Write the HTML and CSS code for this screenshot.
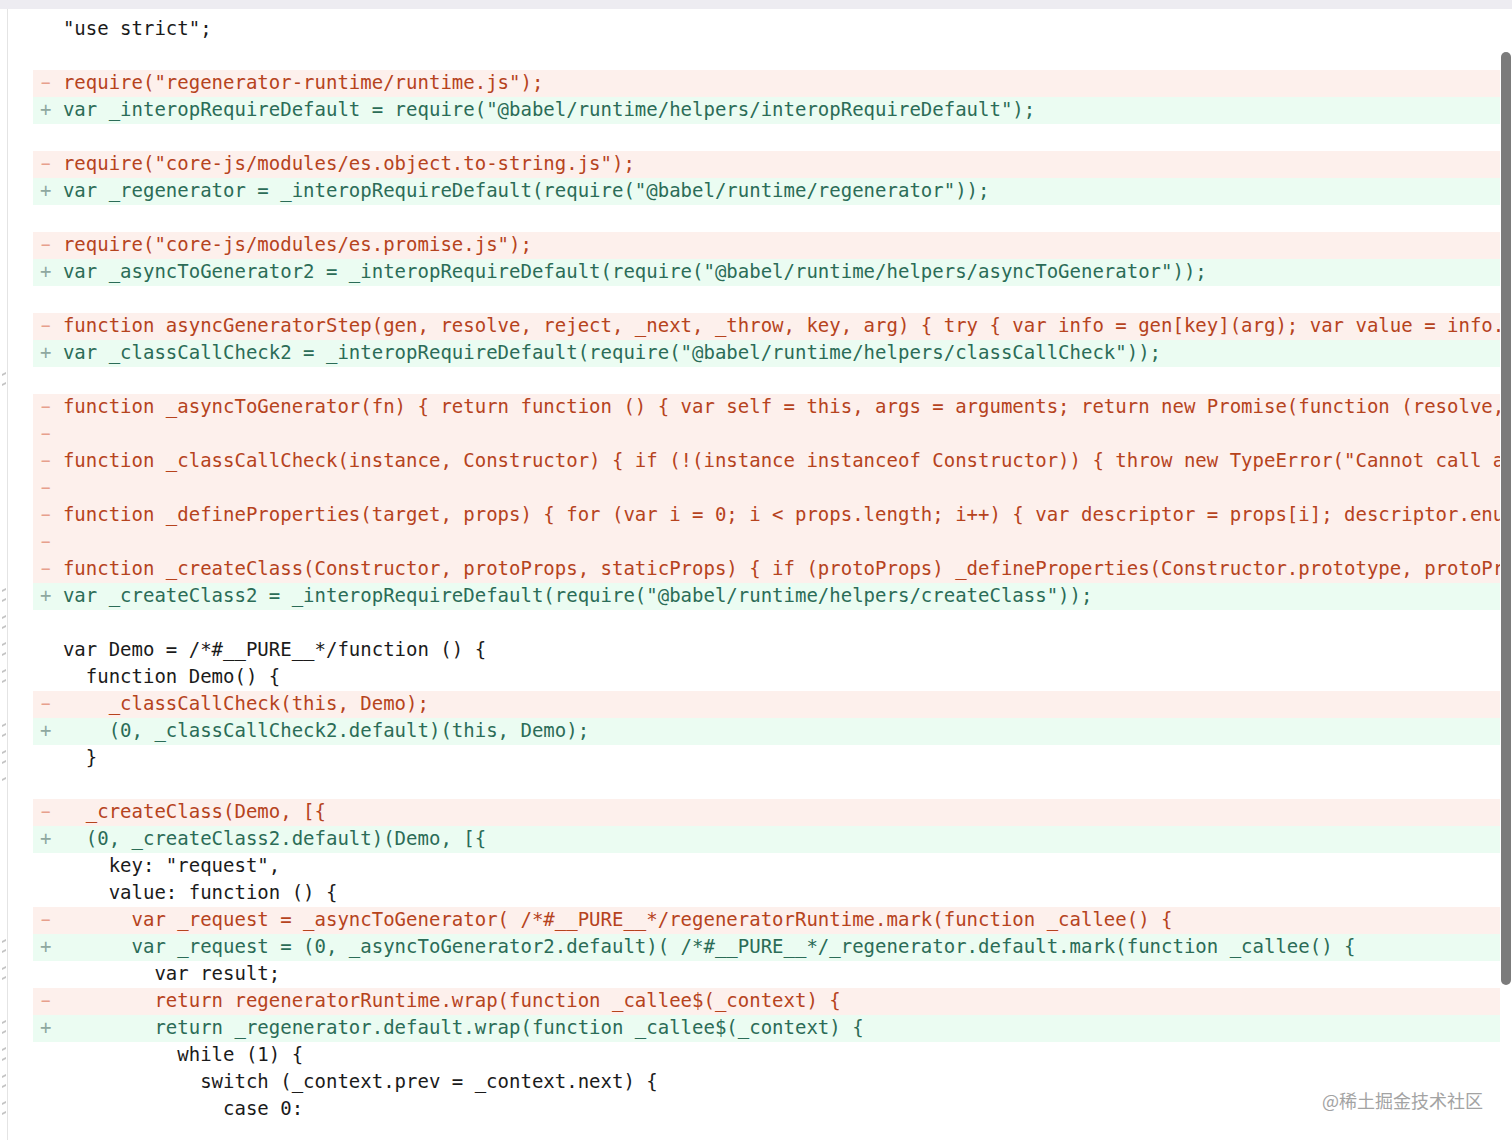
FILE: index.html
```html
<!DOCTYPE html>
<html lang="en">
<head>
<meta charset="utf-8">
<title>diff</title>
<link rel="stylesheet" href="styles.css">
</head>
<body>
<div class="topbar"></div>
<div class="editor">
  <div class="lines">
    <div class="line"><i class="gut"></i><span class="code">  "use strict";</span></div>
    <div class="line empty"><i class="gut"></i><span class="code"></span></div>
    <div class="line del"><i class="gut"></i><span class="code"><b class="sg">-</b> require("regenerator-runtime/runtime.js");</span></div>
    <div class="line add"><i class="gut"></i><span class="code"><b class="sg">+</b> var _interopRequireDefault = require("@babel/runtime/helpers/interopRequireDefault");</span></div>
    <div class="line empty"><i class="gut"></i><span class="code"></span></div>
    <div class="line del"><i class="gut"></i><span class="code"><b class="sg">-</b> require("core-js/modules/es.object.to-string.js");</span></div>
    <div class="line add"><i class="gut"></i><span class="code"><b class="sg">+</b> var _regenerator = _interopRequireDefault(require("@babel/runtime/regenerator"));</span></div>
    <div class="line empty"><i class="gut"></i><span class="code"></span></div>
    <div class="line del"><i class="gut"></i><span class="code"><b class="sg">-</b> require("core-js/modules/es.promise.js");</span></div>
    <div class="line add"><i class="gut"></i><span class="code"><b class="sg">+</b> var _asyncToGenerator2 = _interopRequireDefault(require("@babel/runtime/helpers/asyncToGenerator"));</span></div>
    <div class="line empty"><i class="gut"></i><span class="code"></span></div>
    <div class="line del"><i class="gut"></i><span class="code"><b class="sg">-</b> function asyncGeneratorStep(gen, resolve, reject, _next, _throw, key, arg) { try { var info = gen[key](arg); var value = info.value; } catch (error) { reject(error); return; } if (info.done) { resolve(value); } else { Promise.resolve(value).then(_next, _throw); } }</span></div>
    <div class="line add"><i class="gut"></i><span class="code"><b class="sg">+</b> var _classCallCheck2 = _interopRequireDefault(require("@babel/runtime/helpers/classCallCheck"));</span></div>
    <div class="line empty"><i class="gut mk"></i><span class="code"></span></div>
    <div class="line del"><i class="gut"></i><span class="code"><b class="sg">-</b> function _asyncToGenerator(fn) { return function () { var self = this, args = arguments; return new Promise(function (resolve, reject) { var gen = fn.apply(self, args); }); }; }</span></div>
    <div class="line del"><i class="gut"></i><span class="code"><b class="sg">-</b></span></div>
    <div class="line del"><i class="gut"></i><span class="code"><b class="sg">-</b> function _classCallCheck(instance, Constructor) { if (!(instance instanceof Constructor)) { throw new TypeError("Cannot call a class as a function"); } }</span></div>
    <div class="line del"><i class="gut"></i><span class="code"><b class="sg">-</b></span></div>
    <div class="line del"><i class="gut"></i><span class="code"><b class="sg">-</b> function _defineProperties(target, props) { for (var i = 0; i &lt; props.length; i++) { var descriptor = props[i]; descriptor.enumerable = descriptor.enumerable || false; } }</span></div>
    <div class="line del"><i class="gut"></i><span class="code"><b class="sg">-</b></span></div>
    <div class="line del"><i class="gut"></i><span class="code"><b class="sg">-</b> function _createClass(Constructor, protoProps, staticProps) { if (protoProps) _defineProperties(Constructor.prototype, protoProps); if (staticProps) _defineProperties(Constructor, staticProps); return Constructor; }</span></div>
    <div class="line add"><i class="gut mk"></i><span class="code"><b class="sg">+</b> var _createClass2 = _interopRequireDefault(require("@babel/runtime/helpers/createClass"));</span></div>
    <div class="line empty"><i class="gut mk"></i><span class="code"></span></div>
    <div class="line"><i class="gut mk"></i><span class="code">  var Demo = /*#__PURE__*/function () {</span></div>
    <div class="line"><i class="gut mk"></i><span class="code">    function Demo() {</span></div>
    <div class="line del"><i class="gut"></i><span class="code"><b class="sg">-</b>     _classCallCheck(this, Demo);</span></div>
    <div class="line add"><i class="gut mk"></i><span class="code"><b class="sg">+</b>     (0, _classCallCheck2.default)(this, Demo);</span></div>
    <div class="line"><i class="gut mk"></i><span class="code">    }</span></div>
    <div class="line empty"><i class="gut mk1"></i><span class="code"></span></div>
    <div class="line del"><i class="gut"></i><span class="code"><b class="sg">-</b>   _createClass(Demo, [{</span></div>
    <div class="line add"><i class="gut"></i><span class="code"><b class="sg">+</b>   (0, _createClass2.default)(Demo, [{</span></div>
    <div class="line"><i class="gut"></i><span class="code">      key: "request",</span></div>
    <div class="line"><i class="gut"></i><span class="code">      value: function () {</span></div>
    <div class="line del"><i class="gut"></i><span class="code"><b class="sg">-</b>       var _request = _asyncToGenerator( /*#__PURE__*/regeneratorRuntime.mark(function _callee() {</span></div>
    <div class="line add"><i class="gut mk"></i><span class="code"><b class="sg">+</b>       var _request = (0, _asyncToGenerator2.default)( /*#__PURE__*/_regenerator.default.mark(function _callee() {</span></div>
    <div class="line"><i class="gut mk"></i><span class="code">          var result;</span></div>
    <div class="line del"><i class="gut"></i><span class="code"><b class="sg">-</b>         return regeneratorRuntime.wrap(function _callee$(_context) {</span></div>
    <div class="line add"><i class="gut mk"></i><span class="code"><b class="sg">+</b>         return _regenerator.default.wrap(function _callee$(_context) {</span></div>
    <div class="line"><i class="gut mk"></i><span class="code">            while (1) {</span></div>
    <div class="line"><i class="gut mk"></i><span class="code">              switch (_context.prev = _context.next) {</span></div>
    <div class="line"><i class="gut mk"></i><span class="code">                case 0:</span></div>
    <div class="line empty"><i class="gut"></i><span class="code"></span></div>
  </div>
  <div class="scroll"><div class="thumb"></div></div>
</div>
<div class="watermark">@稀土掘金技术社区</div>
</body>
</html>
```

FILE: styles.css
```css
html, body {
  margin: 0;
  padding: 0;
  background: #ffffff;
  overflow: hidden;
  width: 1512px;
  height: 1140px;
}

.topbar {
  height: 9px;
  background: #edecf1;
}

.editor {
  display: flex;
  height: 1131px;
  overflow: hidden;
}

.lines {
  flex: 1;
  min-width: 0;
  padding-top: 7px;
  background: linear-gradient(#e4e4e4, #e4e4e4) 7px 0 / 1px 100% no-repeat;
}

.line {
  display: flex;
  height: 27px;
}

.gut {
  position: relative;
  flex: none;
  width: 7px;
  margin-right: 26px;
}

.gut.mk::before,
.gut.mk::after,
.gut.mk1::before {
  content: "";
  position: absolute;
  left: 2px;
  width: 4px;
  height: 2px;
  background: #c4c4c4;
  transform: skewY(-25deg);
}

.gut.mk::before,
.gut.mk1::before {
  top: 6px;
}

.gut.mk::after {
  top: 16px;
}

.code {
  flex: 1;
  min-width: 0;
  height: 27px;
  box-sizing: border-box;
  overflow: hidden;
  white-space: pre;
  padding-left: 7px;
  padding-bottom: 2px;
  font-family: "DejaVu Sans Mono", "Liberation Mono", monospace;
  font-size: 19px;
  line-height: 25px;
  color: #1b1b1b;
}

.sg {
  display: inline-block;
  font-weight: normal;
}

.del .code {
  background: #fdf0ec;
  color: #b6431d;
}

.del .sg {
  color: #e7a08c;
  transform: scaleX(1.7);
}

.add .code {
  background: #ebfcf2;
  color: #2b6c57;
}

.add .sg {
  color: #8fa8a0;
}

.scroll {
  position: relative;
  flex: none;
  width: 12px;
}

.thumb {
  position: absolute;
  left: 1px;
  top: 43px;
  width: 10px;
  height: 933px;
  border-radius: 5px;
  background: #7b7b7b;
}

.watermark {
  position: absolute;
  left: 1322px;
  top: 1088px;
  font-family: "Noto Sans CJK SC", "Noto Sans", sans-serif;
  font-size: 18px;
  line-height: 24px;
  color: #a3a3a3;
  white-space: nowrap;
}
```
